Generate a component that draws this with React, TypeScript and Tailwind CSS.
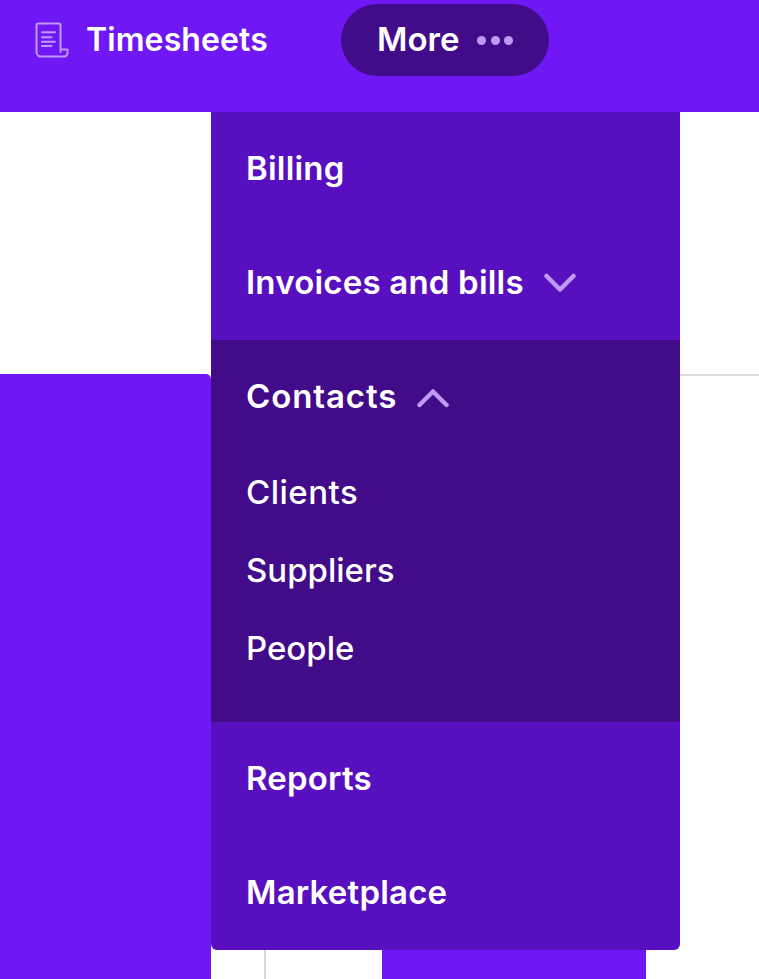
const font = "font-['Inter','Noto_Sans',sans-serif]";

function Row({ label, children, wide }: { label: string; children?: React.ReactNode; wide?: boolean }) {
  return (
    <div className={`flex h-[114px] items-center gap-[20px] pl-[35px] text-[33px] font-semibold text-white ${wide ? "tracking-[0.9px]" : "tracking-[0.2px]"}`}>
      <span>{label}</span>
      {children}
    </div>
  );
}

function Sub({ label, wide }: { label: string; wide?: boolean }) {
  return (
    <div className={`flex h-[78px] items-center pl-[35px] text-[33px] font-medium text-white ${wide ? "tracking-[0.5px]" : ""}`}>{label}</div>
  );
}

function Chevron({ up }: { up?: boolean }) {
  return (
    <svg width="32" height="22" viewBox="0 0 32 22" fill="none" stroke="#bf9af5" strokeWidth="4.5" strokeLinecap="round" strokeLinejoin="round">
      <path d={up ? "M2.5 19 L16 5.5 L29.5 19" : "M2.5 4 L16 17.5 L29.5 4"} />
    </svg>
  );
}

export default function App() {
  return (
    <div className={`relative flex h-[979px] w-[759px] flex-col overflow-hidden bg-white ${font}`}>
      <header className="flex h-[112px] shrink-0 items-start bg-[#6f18f5] pt-1">
        <div className="flex h-[72px] items-center pl-[35px]">
          <svg width="34" height="36" viewBox="0 0 34 36" fill="none" stroke="#bf9af5" strokeWidth="2" strokeLinejoin="round" strokeLinecap="round">
            <path d="M25.5 30 V3 a1.5 1.5 0 0 0 -1.5 -1.5 H3 A1.5 1.5 0 0 0 1.5 3 V30 a4.5 4.5 0 0 0 4.5 4.5 H29 a3.5 3.5 0 0 0 3.5 -3.5 V27.5 H25.5" />
            <path d="M7 10.3 H20 M7 15.3 H16.5 M7 19.7 H20 M7 24 H16.5" />
          </svg>
          <span className="ml-[17px] w-[182px] text-[32px] font-semibold tracking-[0.1px] text-white">Timesheets</span>
        </div>
        <div className="ml-[73px] flex h-[72px] w-[208px] items-center gap-[18px] rounded-full bg-[#410b8a] pl-[36px]">
          <span className="text-[33px] font-semibold text-white">More</span>
          <span className="flex gap-[4.5px]">
            <span className="size-[9px] rounded-full bg-[#bf9af5]" />
            <span className="size-[9px] rounded-full bg-[#bf9af5]" />
            <span className="size-[9px] rounded-full bg-[#bf9af5]" />
          </span>
        </div>
      </header>

      <main className="flex flex-1 flex-col">
        <div className="h-[262px] shrink-0" />
        <div className="flex flex-1">
          <aside className="w-[211px] shrink-0 rounded-tr-[5px] bg-[#6f18f5]" />
          <div className="flex flex-1 flex-col">
            <div className="h-[2px] shrink-0 bg-[#dcdcdc]" />
            <div className="flex flex-1 items-end">
              <div className="h-[60px] w-[55px] border-r-2 border-[#d9d9d9]" />
              <div className="ml-[116px] h-[60px] w-[264px] bg-[#6f18f5]" />
            </div>
          </div>
        </div>
      </main>

      <nav className="absolute left-[211px] top-[112px] w-[469px] overflow-hidden rounded-b-[6px] bg-[#570fc0]">
        <Row label="Billing" />
        <Row label="Invoices and bills">
          <Chevron />
        </Row>
        <div className="h-[382px] bg-[#410b8a]">
          <Row label="Contacts" wide>
            <Chevron up />
          </Row>
          <div>
            <Sub label="Clients" wide />
            <Sub label="Suppliers" />
            <Sub label="People" />
          </div>
        </div>
        <Row label="Reports" />
        <Row label="Marketplace" />
      </nav>
    </div>
  );
}
